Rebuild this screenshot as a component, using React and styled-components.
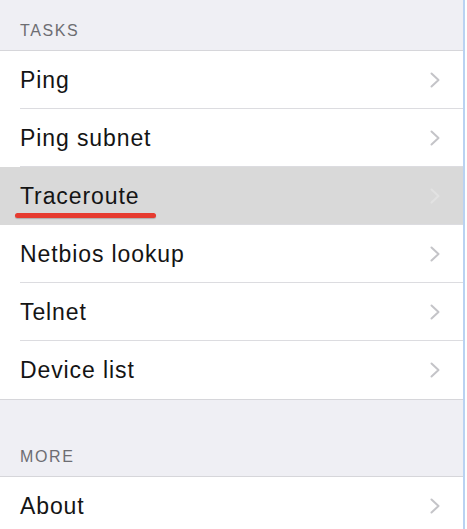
import React from "react";
import styled, { createGlobalStyle } from "styled-components";

const GlobalStyle = createGlobalStyle`
  html, body {
    margin: 0;
    padding: 0;
    background: #ffffff;
  }
  body {
    font-family: "Liberation Sans", Arial, sans-serif;
  }
`;

const sections = [
  {
    title: "TASKS",
    top: 50,
    items: ["Ping", "Ping subnet", "Traceroute", "Netbios lookup", "Telnet", "Device list"],
  },
  { title: "MORE", top: 76, items: ["About"] },
];

export default function App() {
  return (
    <>
      <GlobalStyle />
      <Screen>
        {sections.map((section) => (
          <Section key={section.title}>
            <Header $height={section.top}>
              <HeaderText>{section.title}</HeaderText>
            </Header>
            <List>
              {section.items.map((item, i) => (
                <Row
                  key={item}
                  $selected={item === "Traceroute"}
                  $last={i === section.items.length - 1}
                >
                  <Label>{item}</Label>
                  {item === "Traceroute" && <Underline />}
                  <Chevron $faded={item === "Traceroute"} />
                </Row>
              ))}
            </List>
          </Section>
        ))}
      </Screen>
    </>
  );
}

function Chevron({ $faded }) {
  return (
    <ChevronSvg viewBox="0 0 10 16" width="10" height="16" $faded={$faded}>
      <polyline points="1.5,1.5 8.5,8 1.5,14.5" />
    </ChevronSvg>
  );
}

const Screen = styled.div`
  width: 463px;
  height: 529px;
  overflow: hidden;
  background: #efeff4;
  border-right: 2px solid #b9d2f2;
  box-sizing: content-box;
`;

const Section = styled.section`
  display: flex;
  flex-direction: column;
`;

const Header = styled.div`
  height: ${(p) => p.$height}px;
  display: flex;
  align-items: flex-end;
  padding: 0 20px 13px;
  box-sizing: border-box;
`;

const HeaderText = styled.span`
  font-size: 16px;
  line-height: 12px;
  letter-spacing: 1.6px;
  color: #6d6d72;
`;

const List = styled.div`
  background: #ffffff;
  border-top: 1px solid #d6d6da;
  border-bottom: 1px solid #d6d6da;
`;

const Row = styled.div`
  position: relative;
  height: 58px;
  display: flex;
  align-items: center;
  justify-content: space-between;
  padding: 0 23px 0 20px;
  box-sizing: border-box;
  background: ${(p) => (p.$selected ? "#d9d9d9" : "#ffffff")};

  &::after {
    content: "";
    position: absolute;
    left: 20px;
    right: 0;
    bottom: 0;
    height: 1px;
    background: ${(p) => (p.$last ? "transparent" : "#dcdce0")};
  }
`;

const Label = styled.span`
  font-size: 23px;
  letter-spacing: 0.9px;
  color: #141414;
  margin-top: 1px;
`;

const Underline = styled.span`
  position: absolute;
  left: 15px;
  top: 46px;
  width: 141px;
  height: 5px;
  border-radius: 3px;
  background: #e63b30;
  box-shadow: 0 1px 1px rgba(0, 0, 0, 0.2);
`;

const ChevronSvg = styled.svg`
  flex-shrink: 0;
  fill: none;
  stroke: ${(p) => (p.$faded ? "#e2e2e2" : "#c4c4c8")};
  stroke-width: 2;
  stroke-linecap: round;
  stroke-linejoin: round;
`;
